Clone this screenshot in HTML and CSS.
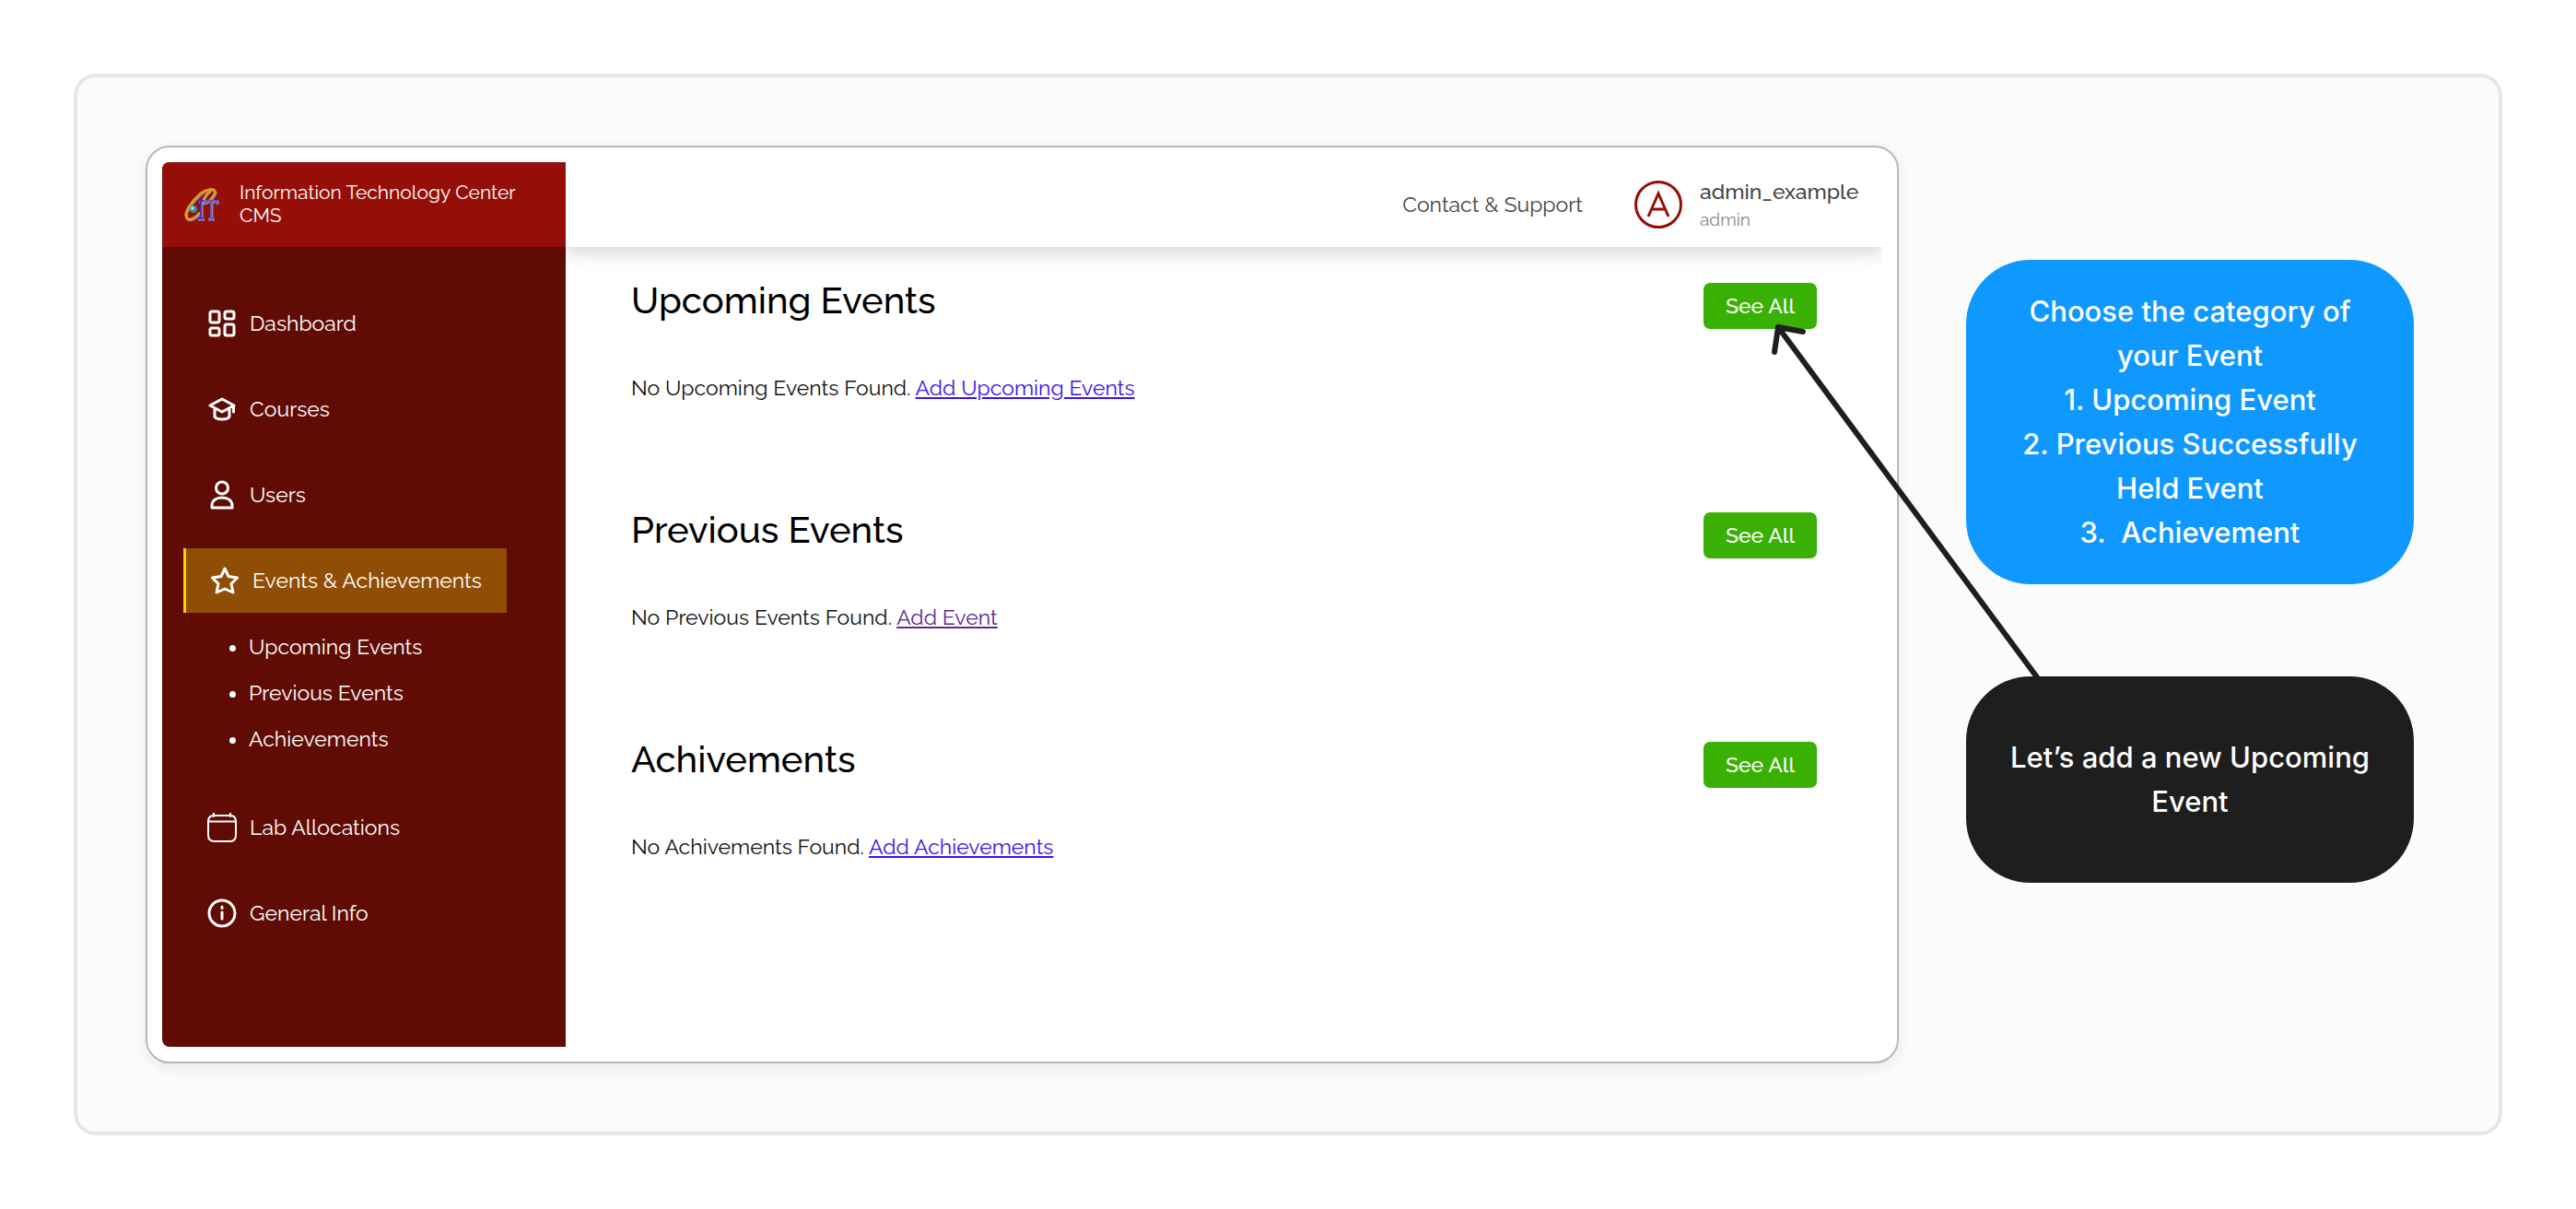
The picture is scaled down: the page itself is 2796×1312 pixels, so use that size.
FILE: index.html
```
<!DOCTYPE html>
<html lang="en">
<head>
<meta charset="utf-8">
<meta name="viewport" content="width=device-width, initial-scale=1">
<title>Information Technology Center CMS</title>
<link rel="stylesheet" href="styles.css">
</head>
<body>
<div class="board">
  <div class="window">
    <div class="app">
      <aside class="sidebar">
        <div class="brand">
          <svg class="logo" viewBox="0 0 36 37" aria-hidden="true">
            <g fill="none" stroke-linecap="round">
              <path d="M34 7C34 1 26 1 18 8C9 16 0 28 3 34C6 38 13 34 17 29M34 7C31 14 25 18 21 18C20 15 23 9 29 4" stroke="#9c9a90" stroke-width="3"/>
              <path d="M33 6C33 1 25 1 17 7C8 15-1 27 2 33C5 37 12 33 16 28M33 6C30 13 25 17 21 17C19 15 23 8 28 3" stroke="#ee9a0a" stroke-width="2"/>
            </g>
            <circle cx="10" cy="24" r="4" fill="#2f8f9d"/>
            <circle cx="9" cy="23" r="2" fill="#a6dcbf"/>
            <g fill="none" stroke-width="3">
              <path d="M16 16H22M19 16V35M15 35H22" stroke="#9a8fa8"/>
              <path d="M23 19V16H36V19M30 16V35M26 35H33" stroke="#8f86a6"/>
              <path d="M15 15H21M18 15V34M14 34H21" stroke="#4a2bd0" stroke-width="2"/>
              <path d="M23 18V15H35V18M29 15V34M26 34H32" stroke="#6a58c8" stroke-width="2"/>
            </g>
          </svg>
          <span class="brand-name">Information Technology Center CMS</span>
        </div>
        <nav class="nav">
          <a class="nav-link" href="#dashboard">
            <svg class="icon" viewBox="0 0 32 32"><rect x="3" y="3" width="10" height="12" rx="2"/><rect x="19" y="3" width="10" height="8" rx="2"/><rect x="3" y="21" width="10" height="8" rx="2"/><rect x="19" y="17" width="10" height="12" rx="2"/></svg>
            Dashboard
          </a>
          <a class="nav-link" href="#courses">
            <svg class="icon" viewBox="0 0 32 32"><path d="M3 12L16 5L29 12L16 19ZM8 15V24C10 28 22 28 24 24V15M28.500 12V19"/></svg>
            Courses
          </a>
          <a class="nav-link" href="#users">
            <svg class="icon" viewBox="0 0 32 32"><circle cx="16" cy="8.500" r="6.500"/><path d="M5 30V28C5 22 10 19 16 19S27 22 27 28V30Z"/></svg>
            Users
          </a>
          <a class="nav-link active" href="#events" aria-current="page">
            <svg class="icon" viewBox="0 0 32 32"><path d="M16 3L20 11.500L29.500 13L23 19.500L25 29L16 25L7 29L9 19.500L2.500 13L12 11.500Z"/></svg>
            Events &amp; Achievements
          </a>
          <ul class="subnav">
            <li><a href="#upcoming">Upcoming Events</a></li>
            <li><a href="#previous">Previous Events</a></li>
            <li><a href="#achievements">Achievements</a></li>
          </ul>
          <a class="nav-link" href="#labs">
            <svg class="icon thin" viewBox="0 0 32 32"><path d="M7 3H25Q31 3 31 10V24Q31 31 24 31H8Q1 31 1 24V10Q1 3 7 3ZM1 9.500H31M7 0V4M25 0V4"/></svg>
            Lab Allocations
          </a>
          <a class="nav-link" href="#info">
            <svg class="icon" viewBox="0 0 32 32"><circle cx="16" cy="16" r="14"/><path d="M16 15V22M16 9V10.500"/></svg>
            General Info
          </a>
        </nav>
      </aside>
      <div class="content">
        <header class="topbar">
          <a class="contact" href="#contact">Contact &amp; Support</a>
          <div class="account">
            <span class="avatar"><svg viewBox="0 0 52 52" aria-hidden="true"><circle cx="26" cy="26" r="24.500"/><path d="M15 39L26 14L37 39M19 31H33"/></svg></span>
            <span class="who"><span class="user">admin_example</span><span class="role">admin</span></span>
          </div>
        </header>
        <main class="sections">
          <section class="section" id="upcoming">
            <div class="section-head"><h2>Upcoming Events</h2><button type="button">See All</button></div>
            <p>No Upcoming Events Found. <a href="#add-upcoming">Add Upcoming Events</a></p>
          </section>
          <section class="section" id="previous">
            <div class="section-head"><h2>Previous Events</h2><button type="button">See All</button></div>
            <p>No Previous Events Found. <a class="seen" href="#add-event">Add Event</a></p>
          </section>
          <section class="section" id="achievements">
            <div class="section-head"><h2>Achivements</h2><button type="button">See All</button></div>
            <p>No Achivements Found. <a href="#add-achievements">Add Achievements</a></p>
          </section>
        </main>
      </div>
    </div>
  </div>
  <div class="notes">
    <div class="note blue">Choose the category of your Event<br>1. Upcoming Event<br>2. Previous Successfully Held Event<br>3.&nbsp; Achievement</div>
    <div class="note dark">Let’s add a new Upcoming Event
      <svg class="arrow" viewBox="0 0 294 390" aria-hidden="true"><path d="M290 390L6 6M2 33L6 6L33 11"/></svg>
    </div>
  </div>
</div>
</body>
</html>
```
FILE: styles.css
```
* { box-sizing: border-box; }

body {
  margin: 0;
  padding: 80px;
  background: #fff;
  color: #111;
  font: 23px/32px Raleway, Lato, sans-serif;
}

a { color: inherit; text-decoration: none; }

.board {
  display: flex;
  align-items: flex-start;
  gap: 73px;
  padding: 74px 92px 74px 74px;
  border: 4px solid #e6e6e6;
  border-radius: 24px;
  background: #fbfbfb;
}

.window {
  flex: 1;
  padding: 16px;
  border: 2px solid #b8b8b8;
  border-radius: 26px;
  background: #fff;
  box-shadow: 0 4px 16px rgba(0, 0, 0, .08);
}

.app {
  display: flex;
  min-height: 960px;
  border-radius: 8px;
  overflow: hidden;
}

/* Sidebar */
.sidebar {
  position: relative;
  z-index: 1;
  flex: 0 0 438px;
  background: #600c05;
  color: #fff;
}

.brand {
  display: flex;
  align-items: center;
  gap: 24px;
  height: 92px;
  padding: 0 40px 2px 24px;
  background: #950f08;
}

.logo { flex: none; width: 36px; height: 37px; overflow: visible; }

.brand-name { font-size: 21px; line-height: 25px; }

.nav {
  display: flex;
  flex-direction: column;
  gap: 24px;
  padding: 48px 64px 40px 23px;
}

.nav-link {
  display: flex;
  align-items: center;
  gap: 14px;
  height: 69px;
  padding-left: 26px;
}

.nav-link.active {
  height: 70px;
  border-left: 3px solid #f5d400;
  background: #904d05;
}

.icon {
  width: 32px;
  height: 32px;
  fill: none;
  stroke: #fff;
  stroke-width: 3;
  stroke-linecap: round;
  stroke-linejoin: round;
}

.icon.thin { stroke-width: 2; }

.subnav {
  margin: -12px 0 12px;
  padding: 0 0 0 71px;
  line-height: 50px;
}

/* Top bar */
.content { flex: 1; }

.topbar {
  display: flex;
  align-items: center;
  justify-content: flex-end;
  gap: 56px;
  height: 92px;
  padding-right: 23px;
  color: #444;
  box-shadow: 0 4px 20px rgba(0, 0, 0, .2);
}

.account { display: flex; align-items: center; gap: 19px; }

.avatar { display: flex; }

.avatar svg {
  width: 52px;
  height: 52px;
  fill: none;
  stroke: #950f08;
  stroke-width: 3;
}

.who { display: flex; flex-direction: column; min-width: 175px; }

.user { font-weight: 500; }

.role { color: #888; font-size: 19px; line-height: 28px; }

/* Event sections */
.sections {
  display: flex;
  flex-direction: column;
  gap: 111px;
  padding: 39px 71px 0 71px;
}

.section-head {
  display: flex;
  align-items: flex-start;
  justify-content: space-between;
}

h2 {
  margin: 0;
  color: #000;
  font-size: 40px;
  font-weight: 500;
  line-height: 38px;
}

button {
  width: 123px;
  height: 50px;
  padding: 0;
  border: 0;
  border-radius: 7px;
  background: #39b003;
  color: #fff;
  font: 500 23px/32px Raleway, Lato, sans-serif;
}

.section p {
  margin: 40px 0 0;
  line-height: 48px;
}

.section p a { color: #3a12ee; text-decoration: underline; }

.section p a.seen { color: #5b2a91; }

/* Notes beside the window */
.notes {
  flex: 0 0 486px;
  display: flex;
  flex-direction: column;
  gap: 100px;
  padding-top: 124px;
  color: #fff;
  font: 500 31px/48px Inter, sans-serif;
  text-align: center;
}

.note {
  position: relative;
  padding: 32px 38px;
  border-radius: 70px;
}

.blue { background: #0f99ff; }

.dark { padding: 64px 38px; background: #1e1e1e; }

.arrow {
  position: absolute;
  right: 402px;
  bottom: 219px;
  width: 294px;
  height: 390px;
  overflow: visible;
  fill: none;
  stroke: #1e1e1e;
  stroke-width: 6;
  stroke-linecap: round;
  stroke-linejoin: round;
}
```
